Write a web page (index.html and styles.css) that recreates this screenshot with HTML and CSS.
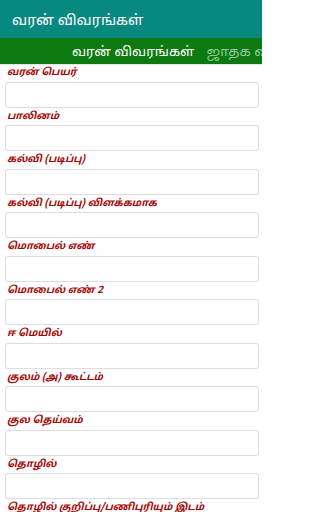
FILE: index.html
```html
<!DOCTYPE html>
<html lang="ta">
<head>
<meta charset="utf-8">
<link rel="stylesheet" href="styles.css">
</head>
<body>
<div class="page">
  <header class="appbar">வரன் விவரங்கள்</header>
  <nav class="tabs">
    <span class="tab active">வரன் விவரங்கள்</span>
    <span class="tab">ஜாதக விவரங்கள்</span>
  </nav>
  <main class="form">
    <div class="field"><label class="label">வரன் பெயர்</label><div class="input"></div></div>
    <div class="field"><label class="label">பாலினம்</label><div class="input"></div></div>
    <div class="field"><label class="label">கல்வி (படிப்பு)</label><div class="input"></div></div>
    <div class="field"><label class="label">கல்வி (படிப்பு) விளக்கமாக</label><div class="input"></div></div>
    <div class="field"><label class="label">மொபைல் எண்</label><div class="input"></div></div>
    <div class="field"><label class="label">மொபைல் எண் 2</label><div class="input"></div></div>
    <div class="field"><label class="label">ஈ மெயில்</label><div class="input"></div></div>
    <div class="field"><label class="label">குலம் (அ) கூட்டம்</label><div class="input"></div></div>
    <div class="field"><label class="label">குல தெய்வம்</label><div class="input"></div></div>
    <div class="field"><label class="label">தொழில்</label><div class="input"></div></div>
    <div class="field"><label class="label">தொழில் குறிப்பு/பணிபுரியும் இடம்</label><div class="input"></div></div>
  </main>
</div>
</body>
</html>
```

FILE: styles.css
```css
* { box-sizing: border-box; }
html, body {
  margin: 0;
  padding: 0;
  background: #ffffff;
  font-family: "Noto Sans Tamil", "Lohit Tamil", "Noto Sans", Roboto, sans-serif;
}
.page {
  width: 262px;
  height: 512px;
  overflow: hidden;
}
.appbar {
  height: 38px;
  line-height: 34px;
  padding-top: 4px;
  background: #08897f;
  color: #ffffff;
  font-size: 14.5px;
  padding-left: 12px;
  white-space: nowrap;
}
.tabs {
  height: 27px;
  padding-top: 2px;
  background: #0c7a10;
  border-bottom: 1px solid #e4e4e4;
  display: flex;
  gap: 12px;
  padding-left: 72px;
  white-space: nowrap;
  overflow: hidden;
  align-items: center;
  font-size: 13.5px;
}
.tab {
  color: #8fc89a;
  flex: none;
}
.tab.active {
  color: #ffffff;
}
.form {
  padding: 0 3px 0 5px;
  margin-top: -1px;
}
.field {
  display: flex;
  flex-direction: column;
}
.label {
  height: 17.5px;
  line-height: 17.5px;
  padding-left: 2px;
  font-size: 10px;
  font-style: italic;
  font-weight: bold;
  color: #a30a0a;
  white-space: nowrap;
}
.input {
  height: 26px;
  border: 1px solid #dedede;
  border-radius: 3px;
  background: #ffffff;
  box-shadow: 0 0 1px rgba(0,0,0,0.08);
}
```
